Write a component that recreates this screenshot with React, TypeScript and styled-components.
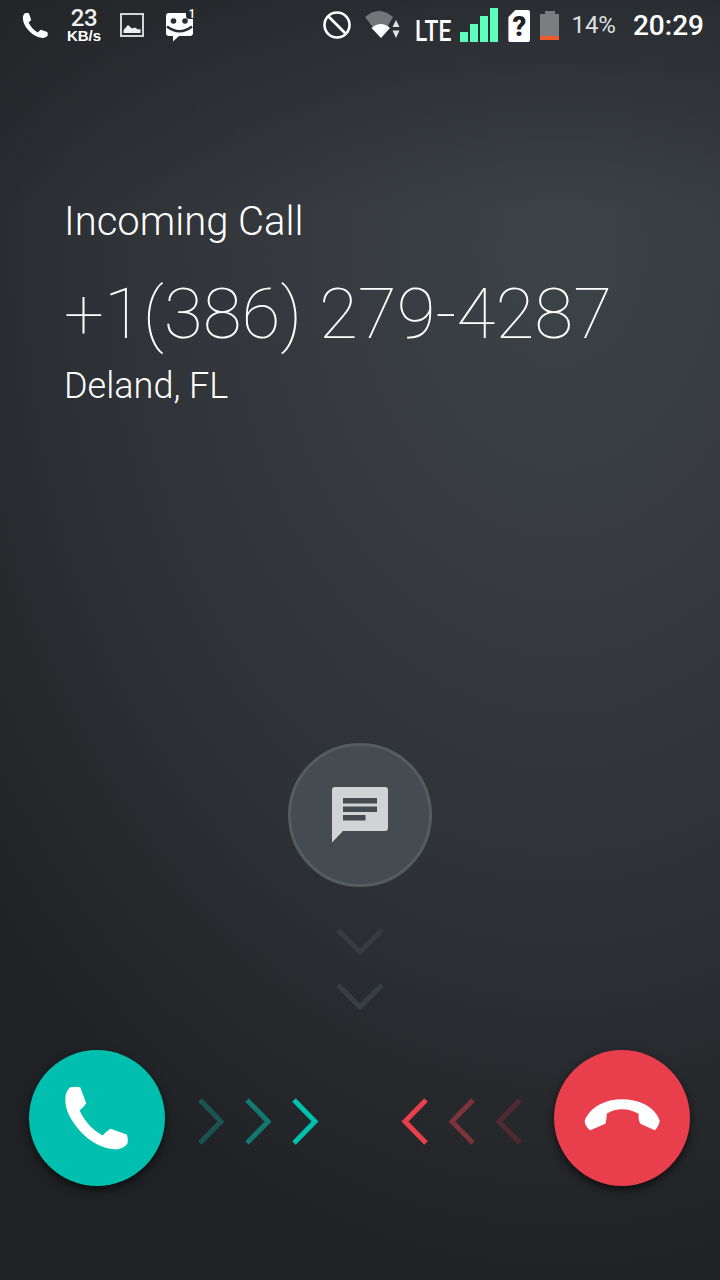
import React from "react";
import styled, { createGlobalStyle } from "styled-components";

const GlobalStyle = createGlobalStyle`
  html, body {
    margin: 0;
    padding: 0;
    background: #1e2023;
  }
`;

const HANDSET =
  "M182 170 C192 167 204 168 212 170 L230 218 C224 227 218 233 210 240 C226 274 248 298 280 315 C287 308 294 300 303 295 L352 312 C356 322 356 332 354 341 C344 352 330 358 315 357 C280 354 240 335 210 300 C180 265 166 235 167 205 C167 192 172 178 182 170 Z";
const HANGUP =
  "M28 106 C36 86 52 68 74 57 C96 46 118 42 140 42 C164 42 188 47 208 57 C230 68 246 86 253 106 C253 114 246 128 238 135 L195 115 C190 106 189 96 190 85 C172 76 156 72 140 72 C124 72 108 76 94 85 C94 96 93 106 90 115 L45 135 C38 130 28 118 28 106 Z";

function Handset({ size }: { size: number }) {
  return (
    <svg width={size} height={size} viewBox="160 160 205 205">
      <path d={HANDSET} fill="#fff" />
    </svg>
  );
}

function Chevron({ dir, color }: { dir: "left" | "right" | "down"; color: string }) {
  if (dir === "down") {
    return (
      <svg width="48" height="28" viewBox="0 0 48 28">
        <path d="M2 2 L24 24 L46 2" fill="none" stroke={color} strokeWidth="5" />
      </svg>
    );
  }
  return (
    <svg width="27" height="47" viewBox="0 0 27 47">
      <path
        d={dir === "right" ? "M2 2 L23 23.5 L2 45" : "M25 2 L4 23.5 L25 45"}
        fill="none"
        stroke={color}
        strokeWidth="5"
      />
    </svg>
  );
}

function App() {
  return (
    <S.Screen>
      <GlobalStyle />
      <S.StatusBar>
        <S.Notifications>
          <Handset size={27} />
          <S.Speed>
            <S.SpeedValue>23</S.SpeedValue>
            <S.SpeedUnit>KB/s</S.SpeedUnit>
          </S.Speed>
          <svg width="24" height="24" viewBox="0 0 24 24">
            <rect x="1" y="1" width="22" height="22" fill="none" stroke="#d4d4d4" strokeWidth="2" />
            <path d="M3.5 20 V17 L8 12 L12 15.5 L15 14.5 L18 16.5 L20.5 16 V20 Z" fill="#eee" />
          </svg>
          <svg width="30" height="34" viewBox="0 0 30 34">
            <path
              d="M3 5 H20 V8 Q20 11 23 11 H27 V25 Q27 28 24 28 H13 L7 33.5 V28 H3 Q0 28 0 25 V8 Q0 5 3 5 Z"
              fill="#fff"
            />
            <circle cx="7.5" cy="13" r="2.8" fill="#2a2d30" />
            <circle cx="19" cy="13" r="2.8" fill="#2a2d30" />
            <path d="M1 18.5 Q13.5 28 26 18.5" fill="none" stroke="#2a2d30" strokeWidth="2.6" />
            <text x="22.5" y="9.5" fill="#fff" fontFamily="Roboto, sans-serif" fontSize="12" fontWeight="500">
              1
            </text>
          </svg>
        </S.Notifications>
        <S.SystemIcons>
          <svg width="30" height="30" viewBox="0 0 30 30">
            <circle cx="15" cy="15" r="12.5" fill="none" stroke="#fff" strokeWidth="2.6" />
            <path d="M6 6 L24 24" stroke="#fff" strokeWidth="2.6" />
          </svg>
          <S.WifiIcon width="36" height="30" viewBox="0 0 36 30">
            <path d="M0 7 Q14 -5 28 7 L16 28 Z" fill="#737679" />
            <path d="M6.5 18 Q16 10 25 18 L16 28 Z" fill="#fff" />
            <path d="M31 10 L34.5 17 H27.5 Z M31 28 L27.5 20.5 H34.5 Z" fill="#e4e4e4" />
          </S.WifiIcon>
          <S.Lte>LTE</S.Lte>
          <S.Signal>
            <S.SignalBar $height={10} />
            <S.SignalBar $height={18} />
            <S.SignalBar $height={26} />
            <S.SignalBar $height={34} />
          </S.Signal>
          <S.Sim>?</S.Sim>
          <S.Battery>
            <S.BatteryCap />
            <S.BatteryBody />
          </S.Battery>
          <S.Percent>14%</S.Percent>
          <S.Clock>20:29</S.Clock>
        </S.SystemIcons>
      </S.StatusBar>

      <S.CallInfo>
        <S.Label>Incoming Call</S.Label>
        <S.Number>+1(386) 279-4287</S.Number>
        <S.Location>Deland, FL</S.Location>
      </S.CallInfo>

      <S.MessageArea>
        <S.MessageButton>
          <svg width="56" height="56" viewBox="0 0 56 56">
            <path
              d="M3 0 H53 Q56 0 56 3 V41 Q56 44 53 44 H11 L0 55.5 V3 Q0 0 3 0 Z"
              fill="#d2d3d5"
            />
            <rect x="11" y="11" width="34" height="5.5" fill="#454b51" />
            <rect x="11" y="19.5" width="34" height="5.5" fill="#454b51" />
            <rect x="11" y="28" width="22.5" height="5.5" fill="#454b51" />
          </svg>
        </S.MessageButton>
        <S.DownHints>
          <Chevron dir="down" color="#383c41" />
          <Chevron dir="down" color="#393e43" />
        </S.DownHints>
      </S.MessageArea>

      <S.Actions>
        <S.CallButton $color="#00bfae">
          <Handset size={68} />
        </S.CallButton>
        <S.Hints $side="left">
          <Chevron dir="right" color="#1b5351" />
          <Chevron dir="right" color="#127870" />
          <Chevron dir="right" color="#00c0ae" />
        </S.Hints>
        <S.Hints $side="right">
          <Chevron dir="left" color="#e93e4c" />
          <Chevron dir="left" color="#7c333a" />
          <Chevron dir="left" color="#502a30" />
        </S.Hints>
        <S.CallButton $color="#e93e4c">
          <S.HangupIcon width="80" height="35" viewBox="20 35 240 105">
            <path d={HANGUP} fill="#fff" />
          </S.HangupIcon>
        </S.CallButton>
      </S.Actions>
    </S.Screen>
  );
}

//@styled
const S = {
  Screen: styled.main`
    width: 720px;
    height: 1280px;
    overflow: hidden;
    display: flex;
    flex-direction: column;
    color: #fff;
    font-family: Roboto, "Liberation Sans", sans-serif;
    background:
      linear-gradient(to bottom, rgba(30, 32, 35, 0.55) 0, rgba(30, 32, 35, 0) 210px),
      radial-gradient(
        ellipse 760px 1060px at 560px 250px,
        #3d4247 0%,
        #373b40 30%,
        #2e3135 62%,
        #1f2124 100%
      );
  `,
  StatusBar: styled.header`
    height: 50px;
    flex: none;
    display: flex;
    justify-content: space-between;
    align-items: center;
    padding: 0 16px 0 22px;
  `,
  Notifications: styled.div`
    display: flex;
    align-items: center;
    gap: 22px;
  `,
  Speed: styled.div`
    width: 36px;
    display: flex;
    flex-direction: column;
    align-items: center;
    margin-left: -5px;
    margin-right: -4px;
  `,
  SpeedValue: styled.span`
    margin-top: -1px;
    font-size: 24px;
    font-weight: 500;
    line-height: 20px;
    letter-spacing: -0.5px;
    color: #f0f0f0;
  `,
  SpeedUnit: styled.span`
    margin-top: 1px;
    font-family: "Liberation Sans", sans-serif;
    font-size: 15px;
    font-weight: 700;
    line-height: 13px;
    white-space: nowrap;
  `,
  SystemIcons: styled.div`
    display: flex;
    align-items: center;
  `,
  WifiIcon: styled.svg`
    margin-left: 13px;
  `,
  Lte: styled.span`
    width: 37px;
    margin-left: 14px;
    margin-top: 12px;
    font-size: 30px;
    font-weight: 500;
    line-height: 24px;
    transform: scaleX(0.76);
    transform-origin: left center;
    white-space: nowrap;
  `,
  Signal: styled.div`
    height: 34px;
    margin: 0 0 0 8px;
    display: flex;
    align-items: flex-end;
    gap: 2px;
  `,
  SignalBar: styled.i<{ $height: number }>`
    width: 8px;
    height: ${({ $height }) => $height}px;
    background: #5effba;
  `,
  Sim: styled.div`
    width: 22px;
    height: 32px;
    margin: 2px 0 0 10px;
    background: #fff;
    border-radius: 2px;
    clip-path: polygon(7px 0, 100% 0, 100% 100%, 0 100%, 0 7px);
    color: #1e2023;
    font-size: 27px;
    font-weight: 900;
    line-height: 35px;
    text-align: center;
  `,
  Battery: styled.div`
    width: 19px;
    margin-left: 10px;
    display: flex;
    flex-direction: column;
    align-items: center;
  `,
  BatteryCap: styled.i`
    width: 10px;
    height: 3px;
    background: #7b7e81;
  `,
  BatteryBody: styled.i`
    width: 19px;
    height: 26px;
    box-sizing: border-box;
    background: #7b7e81;
    border-bottom: 4px solid #ef5a2b;
  `,
  Percent: styled.span`
    margin-left: 12px;
    font-size: 24px;
    color: #dfe0e1;
  `,
  Clock: styled.span`
    margin-left: 17px;
    font-size: 28px;
    font-weight: 500;
  `,
  CallInfo: styled.section`
    flex: none;
    padding: 149px 0 0 64px;
    display: flex;
    flex-direction: column;
  `,
  Label: styled.h2`
    margin: 0;
    font-size: 40px;
    font-weight: 300;
    line-height: 46px;
  `,
  Number: styled.h1`
    margin: 26px 0 0 0;
    font-size: 71px;
    font-weight: 100;
    line-height: 86px;
    white-space: nowrap;
  `,
  Location: styled.p`
    margin: 7px 0 0 0;
    font-size: 36px;
    font-weight: 300;
    line-height: 44px;
  `,
  MessageArea: styled.section`
    flex: 1;
    padding-top: 335px;
    display: flex;
    flex-direction: column;
    align-items: center;
  `,
  MessageButton: styled.button`
    width: 144px;
    height: 144px;
    padding: 0;
    box-sizing: border-box;
    border: 3px solid #565b60;
    border-radius: 50%;
    background: #454b51;
    display: flex;
    align-items: center;
    justify-content: center;
  `,
  DownHints: styled.div`
    margin-top: 41px;
    display: flex;
    flex-direction: column;
    gap: 27px;
  `,
  Actions: styled.footer`
    flex: none;
    padding: 0 30px 94px 29px;
    display: flex;
    align-items: center;
    justify-content: space-between;
  `,
  CallButton: styled.button<{ $color: string }>`
    width: 136px;
    height: 136px;
    padding: 0;
    border: none;
    border-radius: 50%;
    background: ${({ $color }) => $color};
    box-shadow: 0 4px 9px rgba(0, 0, 0, 0.6);
    display: flex;
    align-items: center;
    justify-content: center;
  `,
  HangupIcon: styled.svg`
    margin-bottom: 8px;
  `,
  Hints: styled.div<{ $side: "left" | "right" }>`
    flex: 1;
    margin-top: 6px;
    padding: ${({ $side }) => ($side === "left" ? "0 0 0 33px" : "0 32px 0 0")};
    display: flex;
    justify-content: ${({ $side }) => ($side === "left" ? "flex-start" : "flex-end")};
    gap: 20px;
  `,
};

export default App;
